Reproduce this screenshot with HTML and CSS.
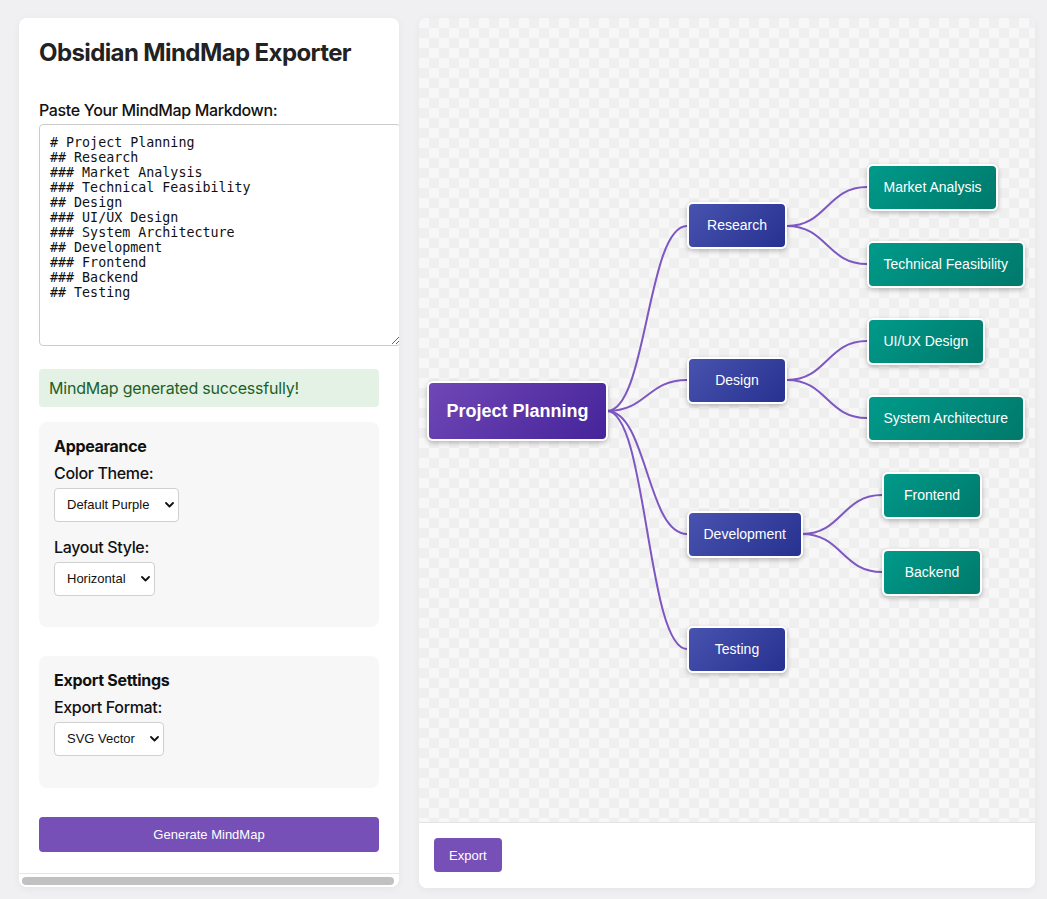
FILE: index.html
```html
<!DOCTYPE html>
<html lang="en">
<head>
<meta charset="utf-8">
<title>Obsidian MindMap Exporter</title>
<link rel="stylesheet" href="styles.css">
</head>
<body>
<div class="app">
  <aside class="sidebar">
    <div class="sidebar-body">
      <h1 class="title">Obsidian MindMap Exporter</h1>
      <div class="group">
        <label class="label" for="md">Paste Your MindMap Markdown:</label>
        <textarea id="md" class="editor"># Project Planning
## Research
### Market Analysis
### Technical Feasibility
## Design
### UI/UX Design
### System Architecture
## Development
### Frontend
### Backend
## Testing</textarea>
      </div>
      <div class="status">MindMap generated successfully!</div>

      <section class="panel">
        <h3 class="panel-title">Appearance</h3>
        <div class="field">
          <label class="label">Color Theme:</label>
          <span class="select-wrap">
            <select class="select">
              <option>Default Purple</option>
              <option>Ocean Blue</option>
              <option>Forest Green</option>
            </select>
            <svg class="chev" width="9" height="6" viewBox="0 0 9 6"><path d="M1 1 L4.5 4.5 L8 1" fill="none" stroke="#111" stroke-width="1.8" stroke-linecap="round" stroke-linejoin="round"/></svg>
          </span>
        </div>
        <div class="field">
          <label class="label">Layout Style:</label>
          <span class="select-wrap">
            <select class="select">
              <option>Horizontal</option>
              <option>Vertical</option>
              <option>Radial</option>
            </select>
            <svg class="chev" width="9" height="6" viewBox="0 0 9 6"><path d="M1 1 L4.5 4.5 L8 1" fill="none" stroke="#111" stroke-width="1.8" stroke-linecap="round" stroke-linejoin="round"/></svg>
          </span>
        </div>
      </section>

      <section class="panel panel-export">
        <h3 class="panel-title">Export Settings</h3>
        <div class="field">
          <label class="label">Export Format:</label>
          <span class="select-wrap">
            <select class="select">
              <option>SVG Vector</option>
              <option>PNG Image</option>
              <option>HTML</option>
            </select>
            <svg class="chev" width="9" height="6" viewBox="0 0 9 6"><path d="M1 1 L4.5 4.5 L8 1" fill="none" stroke="#111" stroke-width="1.8" stroke-linecap="round" stroke-linejoin="round"/></svg>
          </span>
        </div>
      </section>

      <button class="btn btn-block">Generate MindMap</button>
    </div>
    <div class="hscroll"><div class="hscroll-thumb"></div></div>
  </aside>

  <main class="preview">
    <div class="canvas">
      <svg class="links" width="616" height="804" viewBox="0 0 616 804">
        <g fill="none" stroke="#7e57c2" stroke-width="2">
          <path d="M188 393 C228 393 228 208 268 208"/>
          <path d="M188 393 C228 393 228 362 268 362"/>
          <path d="M188 393 C228 393 228 516 268 516"/>
          <path d="M188 393 C228 393 228 631 268 631"/>
          <path d="M368 208 C408 208 408 169 448 169"/>
          <path d="M368 208 C408 208 408 246 448 246"/>
          <path d="M368 362 C408 362 408 323 448 323"/>
          <path d="M368 362 C408 362 408 400 448 400"/>
          <path d="M383 516 C423 516 423 477 463 477"/>
          <path d="M383 516 C423 516 423 554 463 554"/>
        </g>
      </svg>
      <div class="node root" style="left:8px;top:363px">Project Planning</div>
      <div class="node l2" style="left:268px;top:184px">Research</div>
      <div class="node l2" style="left:268px;top:339px">Design</div>
      <div class="node l2" style="left:268px;top:493px">Development</div>
      <div class="node l2" style="left:268px;top:608px">Testing</div>
      <div class="node l3" style="left:448px;top:146px">Market Analysis</div>
      <div class="node l3" style="left:448px;top:223px">Technical Feasibility</div>
      <div class="node l3" style="left:448px;top:300px">UI/UX Design</div>
      <div class="node l3" style="left:448px;top:377px">System Architecture</div>
      <div class="node l3" style="left:463px;top:454px">Frontend</div>
      <div class="node l3" style="left:463px;top:531px">Backend</div>
    </div>
    <div class="toolbar">
      <button class="btn btn-export">Export</button>
    </div>
  </main>
</div>
</body>
</html>
```

FILE: styles.css
```css
* { box-sizing: border-box; }

html, body {
  margin: 0;
  padding: 0;
  background: #f0f0f2;
  font-family: Inter, "Liberation Sans", Arial, sans-serif;
  color: #111;
}

.app {
  height: 100vh;
  display: flex;
  gap: 20px;
  padding: 18px 12px 11px 19px;
}

/* Sidebar */
.sidebar {
  flex: 0 0 380px;
  display: flex;
  flex-direction: column;
  background: #fff;
  border-radius: 8px;
  box-shadow: 0 2px 8px rgba(0, 0, 0, 0.05);
  overflow: hidden;
  margin-bottom: 1px;
}

.sidebar-body {
  flex: 1;
  min-height: 0;
  padding: 20px;
  overflow: hidden;
}

.hscroll {
  flex: none;
  height: 14px;
  border-top: 1px solid #e6e6e6;
  padding: 3px 5px 2px 3px;
  background: #fff;
}

.hscroll-thumb {
  height: 8px;
  background: #c1c1c1;
  border-radius: 4px;
}

.title {
  margin: 0 0 34px;
  font-size: 24px;
  line-height: 29px;
  font-weight: 700;
  color: #222;
  letter-spacing: -0.6px;
}

.group {
  margin-bottom: 23px;
}

.label {
  display: block;
  font-size: 16px;
  line-height: 19px;
  font-weight: 500;
  color: #111;
  letter-spacing: -0.35px;
  margin-bottom: 4px;
}

.editor {
  display: block;
  box-sizing: content-box;
  width: 100%;
  height: 200px;
  padding: 10px;
  margin: 0;
  border: 1px solid #ccc;
  border-radius: 4px;
  font-family: "DejaVu Sans Mono", "Liberation Mono", monospace;
  font-size: 13.33px;
  line-height: 15px;
  color: #111;
  background: #fff;
}

.status {
  background: #e3f2e5;
  color: #1b6127;
  border-radius: 4px;
  padding: 10px;
  font-size: 16px;
  line-height: 18px;
  letter-spacing: -0.2px;
  margin-bottom: 15px;
}

.panel {
  background: #f7f7f7;
  border-radius: 8px;
  padding: 15px;
  margin-bottom: 29px;
}

.panel-export {
  padding-bottom: 16px;
}

.panel-title {
  margin: 0 0 8px;
  font-size: 16px;
  line-height: 19px;
  font-weight: 700;
  color: #111;
  letter-spacing: -0.3px;
}

.field {
  margin-bottom: 16px;
}

.field .label {
  margin-bottom: 5px;
}

.select-wrap {
  position: relative;
  display: inline-block;
  vertical-align: top;
}

.select {
  display: block;
  appearance: none;
  -webkit-appearance: none;
  font-family: "Liberation Sans", Arial, sans-serif;
  font-size: 13px;
  line-height: 16px;
  height: 34px;
  padding: 8px 28px 8px 12px;
  border: 1px solid #d0d0d0;
  border-radius: 4px;
  background: #fff;
  color: #111;
}

.chev {
  position: absolute;
  right: 5px;
  top: 14px;
  pointer-events: none;
}

.btn {
  font-family: "Liberation Sans", Arial, sans-serif;
  font-size: 13px;
  color: #fff;
  background: #764fb7;
  border: none;
  border-radius: 4px;
  cursor: pointer;
}

.btn-block {
  display: block;
  width: 100%;
  height: 35px;
}

.btn-export {
  height: 34px;
  padding: 0 15px;
}

/* Preview */
.preview {
  flex: 1;
  display: flex;
  flex-direction: column;
  background: #fff;
  border-radius: 8px;
  box-shadow: 0 2px 8px rgba(0, 0, 0, 0.05);
  overflow: hidden;
}

.canvas {
  position: relative;
  flex: 1;
  background: repeating-conic-gradient(#efefef 0 25%, #f7f7f7 0 50%) 0 0 / 20px 20px;
  overflow: hidden;
}

.links {
  position: absolute;
  left: 0;
  top: 0;
}

.node {
  position: absolute;
  min-width: 100px;
  text-align: center;
  white-space: nowrap;
  color: #fff;
  font-family: "Liberation Sans", Arial, sans-serif;
  font-size: 14px;
  line-height: 19px;
  padding: 12px 14.5px;
  border: 2px solid #fff;
  border-radius: 6px;
  box-shadow: 0 2px 5px rgba(0, 0, 0, 0.25);
}

.root {
  font-size: 18px;
  font-weight: 700;
  line-height: 22px;
  padding: 17px 17.5px;
  background: linear-gradient(135deg, #7048b6, #45239a);
}

.l2 {
  background: linear-gradient(135deg, #4853b0, #27318f);
}

.l3 {
  background: linear-gradient(135deg, #009a8a, #00796b);
}

.toolbar {
  border-top: 1px solid #e4e4e4;
  padding: 15px 15px 16px;
  background: #fff;
}
```
